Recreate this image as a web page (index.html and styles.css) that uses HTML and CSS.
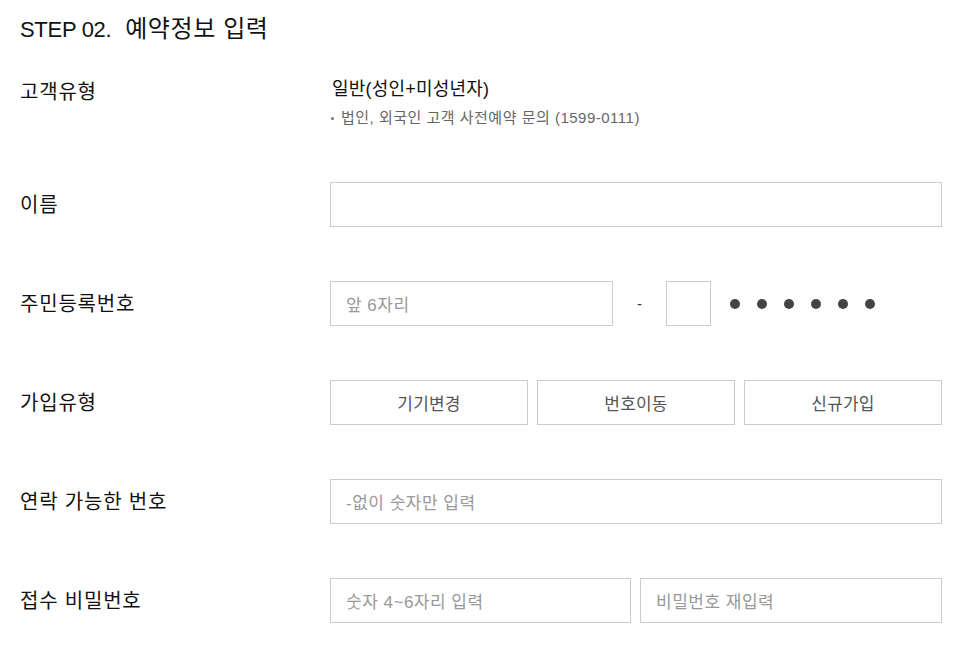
FILE: index.html
```html
<!DOCTYPE html>
<html lang="ko">
<head>
<meta charset="utf-8">
<link rel="stylesheet" href="styles.css">
</head>
<body>
<div class="page">
  <h2 class="title">STEP 02. <span class="title-ko">예약정보 입력</span></h2>
  <div class="row row-type">
    <div class="label">고객유형</div>
    <div class="value">
      <p class="type-main">일반(성인+미성년자)</p>
      <p class="type-note"><span class="bullet"></span>법인, 외국인 고객 사전예약 문의 (1599-0111)</p>
    </div>
  </div>
  <div class="row">
    <div class="label">이름</div>
    <div class="value"><div class="box full"></div></div>
  </div>
  <div class="row">
    <div class="label">주민등록번호</div>
    <div class="value jumin">
      <div class="box front"><span class="ph">앞 6자리</span></div>
      <span class="dash">-</span>
      <div class="box one"></div>
      <div class="dots"><i></i><i></i><i></i><i></i><i></i><i></i></div>
    </div>
  </div>
  <div class="row">
    <div class="label">가입유형</div>
    <div class="value btns">
      <div class="btn">기기변경</div>
      <div class="btn">번호이동</div>
      <div class="btn">신규가입</div>
    </div>
  </div>
  <div class="row">
    <div class="label">연락 가능한 번호</div>
    <div class="value"><div class="box full"><span class="ph">-없이 숫자만 입력</span></div></div>
  </div>
  <div class="row">
    <div class="label">접수 비밀번호</div>
    <div class="value pw">
      <div class="box"><span class="ph">숫자 4~6자리 입력</span></div>
      <div class="box"><span class="ph">비밀번호 재입력</span></div>
    </div>
  </div>
</div>
</body>
</html>
```

FILE: styles.css
```css
* { box-sizing: border-box; }
body {
  margin: 0;
  background: #fff;
  font-family: "Liberation Sans", "Noto Sans CJK KR", sans-serif;
  color: #111;
}
.page {
  padding: 15px 21px 0 20px;
  width: 963px;
}
.title {
  margin: 0;
  font-size: 22px;
  font-weight: normal;
  line-height: 28px;
  letter-spacing: -0.3px;
}
.title-ko {
  font-size: 24px;
  letter-spacing: 0.6px;
  margin-left: 8px;
}
.row {
  display: grid;
  grid-template-columns: 310px 612px;
  align-items: center;
  margin-bottom: 54px;
}
.row-type {
  align-items: start;
  margin-top: 33px;
  margin-bottom: 54px;
}
.label {
  font-size: 20px;
  line-height: 26px;
  letter-spacing: 0.8px;
}
.row-type .label { padding-top: 2px; }
.value p { margin: 0; }
.type-main {
  font-size: 18px;
  line-height: 24px;
  letter-spacing: 0.2px;
  margin-left: 2px !important;
}
.type-note {
  margin-top: 7px !important;
  font-size: 15px;
  line-height: 20px;
  color: #666;
  letter-spacing: 0.5px;
  display: flex;
  align-items: center;
}
.bullet {
  width: 3px;
  height: 3px;
  background: #777;
  border-radius: 50%;
  margin: 0 7px 0 1px;
}
.box {
  height: 45px;
  border: 1px solid #ccc;
  background: #fff;
  display: flex;
  align-items: center;
  padding-left: 15px;
}
.full { width: 612px; }
.ph {
  font-size: 17px;
  color: #999;
  letter-spacing: 0.5px;
}
.jumin {
  display: flex;
  align-items: center;
}
.front { width: 283px; }
.dash {
  width: 53px;
  text-align: center;
  font-size: 15px;
  color: #333;
}
.one { width: 45px; padding: 0; }
.dots {
  display: flex;
  gap: 17px;
  margin-left: 19px;
}
.dots i {
  width: 10px;
  height: 10px;
  border-radius: 50%;
  background: #444;
  display: block;
}
.btns {
  display: grid;
  grid-template-columns: repeat(3, 1fr);
  gap: 9px;
}
.btn {
  height: 45px;
  border: 1px solid #ccc;
  display: flex;
  align-items: center;
  justify-content: center;
  font-size: 17px;
  color: #555;
  letter-spacing: 0.2px;
}
.pw {
  display: grid;
  grid-template-columns: 301px 302px;
  gap: 9px;
}
```
